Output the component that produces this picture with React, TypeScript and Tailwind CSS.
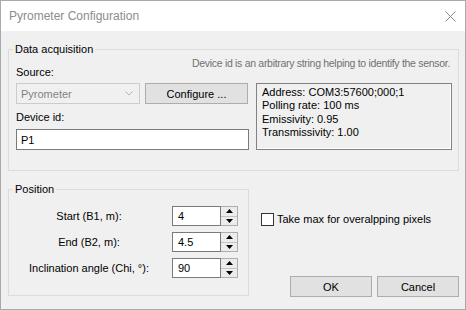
import React from "react";

function Spin({ value }: { value: string }) {
  return (
    <div className="flex h-[20px] ml-[10px]">
      <div className="w-[49px] h-[20px] border border-[#7a7a7a] bg-white pl-[5px] flex items-center">
        {value}
      </div>
      <div className="w-[17px] h-[20px] border border-[#adadad] border-l-0 flex flex-col bg-[#ececec]">
        <div className="flex-1 flex items-center justify-center border-b border-[#c4c4c4]">
          <svg width="7" height="4" viewBox="0 0 7 4">
            <path d="M3.5 0 L7 4 L0 4 Z" fill="#000" />
          </svg>
        </div>
        <div className="flex-1 flex items-center justify-center">
          <svg width="7" height="4" viewBox="0 0 7 4">
            <path d="M0 0 L7 0 L3.5 4 Z" fill="#000" />
          </svg>
        </div>
      </div>
    </div>
  );
}

export default function App() {
  return (
    <div className="w-[466px] h-[310px] border border-[#a9a9a9] bg-[#f0f0f0] flex flex-col text-black text-[11px] leading-[14px] font-['Liberation_Sans',Arial,sans-serif]">
      <div className="h-[30px] bg-white flex items-center justify-between pl-[8px] pr-[9px] shrink-0">
        <span className="text-[12px] text-[#8c8c8c]">Pyrometer Configuration</span>
        <svg width="11" height="11" viewBox="0 0 11 11">
          <path d="M0.5 0.5 L10.5 10.5 M10.5 0.5 L0.5 10.5" stroke="#8a8a8a" strokeWidth="1" />
        </svg>
      </div>
      <div className="flex-1 pl-[7px] pr-[6px] pt-[11px] flex flex-col">
        <fieldset className="w-[451px] h-[129px] border border-[#dcdcdc] pl-[7px] pr-[6px] pt-[1px]">
          <legend className="-ml-[3px] px-[2px] leading-[14px]">Data acquisition</legend>
          <div className="text-right text-[10.5px] tracking-[-0.3px] leading-[12px] text-[#707070] pr-[2px]">
            Device id is an arbitrary string helping to identify the sensor.
          </div>
          <div className="-mt-[4px] leading-[14px]">Source:</div>
          <div className="flex mt-[4px]">
            <div className="flex flex-col w-[233px]">
              <div className="flex">
                <div className="w-[124px] h-[21px] border border-[#cccccc] bg-[#f0f0f0] flex items-center justify-between pl-[4px] pr-[6px] text-[#838383]">
                  <span>Pyrometer</span>
                  <svg width="8" height="5" viewBox="0 0 8 5">
                    <path d="M0.5 0.5 L4 4 L7.5 0.5" stroke="#b5b5b5" fill="none" strokeWidth="1" />
                  </svg>
                </div>
                <button className="ml-[5px] w-[103px] h-[21px] border border-[#adadad] bg-[#e1e1e1] flex items-center justify-center">
                  Configure ...
                </button>
              </div>
              <div className="mt-[6px] leading-[14px]">Device id:</div>
              <div className="mt-[5px] w-[233px] h-[21px] border border-[#7a7a7a] bg-white flex items-center pl-[4px]">
                P1
              </div>
            </div>
            <div className="ml-auto w-[196px] h-[67px] border border-[#828282] shadow-[inset_-1px_-1px_0_#ffffff] pl-[5px] pt-[2px] leading-[13.3px]">
              <div>Address: COM3:57600;000;1</div>
              <div>Polling rate: 100 ms</div>
              <div>Emissivity: 0.95</div>
              <div>Transmissivity: 1.00</div>
            </div>
          </div>
        </fieldset>
        <div className="flex mt-[11px]">
          <fieldset className="w-[241px] h-[114px] border border-[#dcdcdc] pl-[7px] pr-[6px] pt-[10px] shrink-0">
            <legend className="-ml-[3px] px-[2px] leading-[14px]">Position</legend>
            <div className="flex flex-col gap-[6px]">
              <div className="flex items-center h-[20px]">
                <div className="w-[146px] text-center">Start (B1, m):</div>
                <Spin value="4" />
              </div>
              <div className="flex items-center h-[20px]">
                <div className="w-[146px] text-center">End (B2, m):</div>
                <Spin value="4.5" />
              </div>
              <div className="flex items-center h-[20px]">
                <div className="w-[146px] text-center">Inclination angle (Chi, °):</div>
                <Spin value="90" />
              </div>
            </div>
          </fieldset>
          <div className="flex-1 flex flex-col h-[114px]">
            <div className="flex items-center mt-[30px] pl-[12px]">
              <div className="w-[13px] h-[13px] border border-[#333333] bg-white shrink-0" />
              <span className="ml-[3px]">Take max for overalpping pixels</span>
            </div>
            <div className="mt-auto -mb-[1px] flex justify-end gap-[5px]">
              <button className="w-[82px] h-[21px] border border-[#adadad] bg-[#e1e1e1] flex items-center justify-center">
                OK
              </button>
              <button className="w-[82px] h-[21px] border border-[#adadad] bg-[#e1e1e1] flex items-center justify-center">
                Cancel
              </button>
            </div>
          </div>
        </div>
      </div>
    </div>
  );
}
